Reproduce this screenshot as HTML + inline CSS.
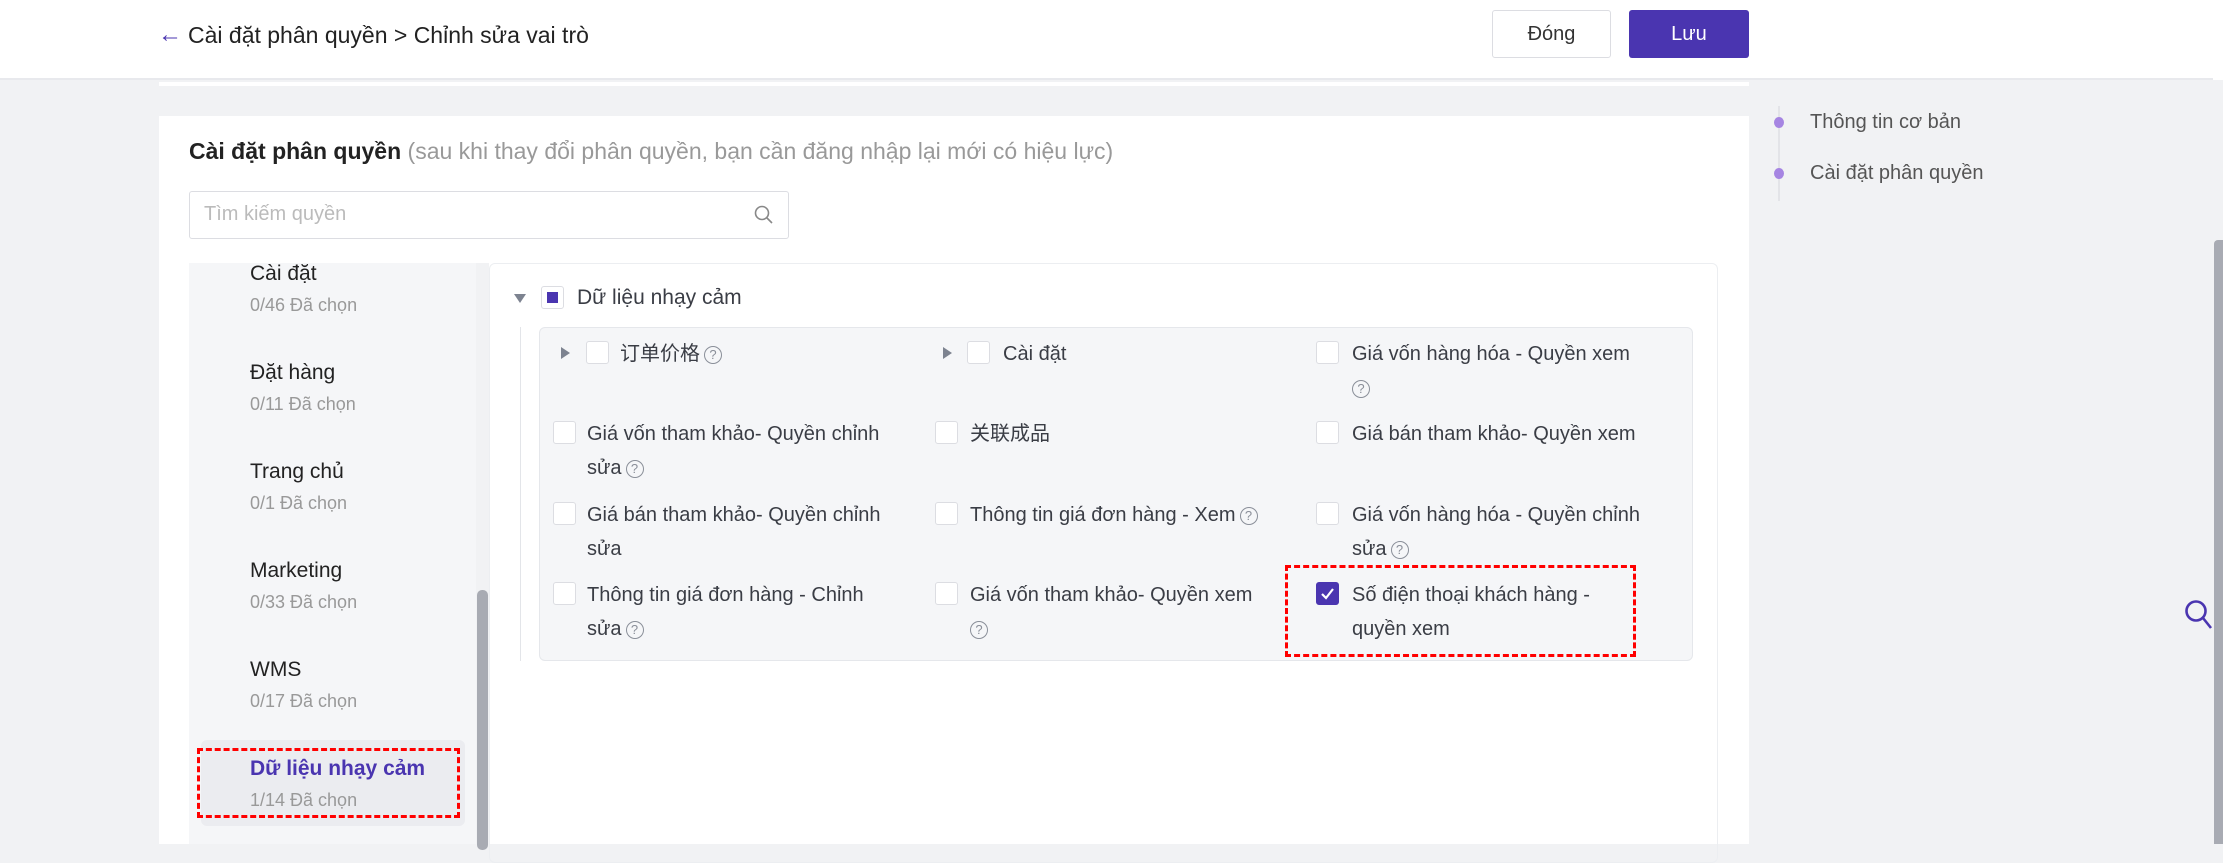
<!DOCTYPE html>
<html><head><meta charset="utf-8"><style>
*{margin:0;padding:0;box-sizing:border-box}
body{width:2223px;height:844px;overflow:hidden;background:#f1f2f4;font-family:"Liberation Sans","Noto Sans CJK SC",sans-serif;position:relative;color:#333}
.a{position:absolute;white-space:nowrap}
.cb{position:absolute;width:23px;height:23px;border:1px solid #dcdde2;border-radius:3px;background:#fff}
.tri{position:absolute;width:0;height:0;border-top:6px solid transparent;border-bottom:6px solid transparent;border-left:9px solid #7d8390}
.t{position:absolute;font-size:20px;color:#3a3d45;line-height:34px}
.q{display:inline-block;width:18px;height:18px;border:1.5px solid #8a8f99;border-radius:50%;font-size:13px;line-height:15px;text-align:center;color:#8a8f99;vertical-align:middle;margin-left:4px}
.mi{position:absolute;left:250px;font-size:21px;color:#222}
.ms{position:absolute;left:250px;font-size:18px;color:#999}
</style></head><body>
<div class="a" style="left:0;top:0;width:2213px;height:80px;background:#fff;border-bottom:2px solid #e8e9ed"></div>
<div class="a" style="left:158px;top:21px;font-size:24px;color:#4a35b0">←</div>
<div class="a" style="left:188px;top:22px;font-size:23px;color:#222">Cài đặt phân quyền &gt; Chỉnh sửa vai trò</div>
<div class="a" style="left:1492px;top:10px;width:119px;height:48px;border:1px solid #dcdde2;border-radius:3px;background:#fff;font-size:20px;text-align:center;line-height:46px;color:#333">Đóng</div>
<div class="a" style="left:1629px;top:10px;width:120px;height:48px;background:#4a35b0;border-radius:3px;font-size:20px;text-align:center;line-height:48px;color:#fff">Lưu</div>
<div class="a" style="left:159px;top:82px;width:1590px;height:4px;background:#fff"></div>
<div class="a" style="left:159px;top:116px;width:1590px;height:728px;background:#fff"></div>
<div class="a" style="left:189px;top:138px;font-size:23px;color:#222"><b>Cài đặt phân quyền</b> <span style="color:#999">(sau khi thay đổi phân quyền, bạn cần đăng nhập lại mới có hiệu lực)</span></div>
<div class="a" style="left:189px;top:191px;width:600px;height:48px;border:1px solid #dcdde2;border-radius:3px"></div>
<div class="a" style="left:204px;top:203px;font-size:20px;color:#bbb">Tìm kiếm quyền</div>
<svg class="a" style="left:753px;top:204px" width="22" height="22" viewBox="0 0 22 22"><circle cx="9" cy="9" r="6.5" fill="none" stroke="#888" stroke-width="1.6"/><line x1="14" y1="14" x2="19" y2="19" stroke="#888" stroke-width="1.6"/></svg>
<div class="a" style="left:189px;top:263px;width:287px;height:581px;background:#f5f6f8"></div>
<div class="a" style="left:476px;top:263px;width:13px;height:581px;background:#f1f2f4"></div>
<div class="a" style="left:477px;top:590px;width:11px;height:260px;background:#a8abb3;border-radius:5px"></div>
<div class="a" style="left:201px;top:740px;width:264px;height:86px;background:#ebecf0;border-radius:6px"></div>
<div class="a" style="left:197px;top:748px;width:263px;height:70px;border:3px dashed #f00"></div>
<div class="mi" style="top:262px">Cài đặt</div><div class="ms" style="top:295px">0/46 Đã chọn</div>
<div class="mi" style="top:361px">Đặt hàng</div><div class="ms" style="top:394px">0/11 Đã chọn</div>
<div class="mi" style="top:460px">Trang chủ</div><div class="ms" style="top:493px">0/1 Đã chọn</div>
<div class="mi" style="top:559px">Marketing</div><div class="ms" style="top:592px">0/33 Đã chọn</div>
<div class="mi" style="top:658px">WMS</div><div class="ms" style="top:691px">0/17 Đã chọn</div>
<div class="mi" style="top:757px;color:#4a35b0;font-weight:bold">Dữ liệu nhạy cảm</div><div class="ms" style="top:790px">1/14 Đã chọn</div>
<div class="a" style="left:489px;top:263px;width:1229px;height:600px;border:1px solid #eceef1;border-radius:6px"></div>
<div class="a" style="left:514px;top:294px;width:0;height:0;border-left:6px solid transparent;border-right:6px solid transparent;border-top:9px solid #7d8390"></div>
<div class="cb" style="left:541px;top:286px"><div style="position:absolute;left:5px;top:5px;width:11px;height:11px;background:#4a35b0"></div></div>
<div class="t" style="left:577px;top:281px;font-size:21px">Dữ liệu nhạy cảm</div>
<div class="a" style="left:520px;top:327px;width:1px;height:334px;background:#e3e5e9"></div>
<div class="a" style="left:539px;top:327px;width:1154px;height:334px;background:#f5f6f8;border:1px solid #e5e7eb;border-radius:6px"></div>
<div class="tri" style="left:561px;top:347px"></div><div class="cb" style="left:586px;top:341px"></div>
<div class="t" style="left:620px;top:337px">订单价格<span class="q">?</span></div>
<div class="tri" style="left:943px;top:347px"></div><div class="cb" style="left:967px;top:341px"></div>
<div class="t" style="left:1003px;top:337px">Cài đặt</div>
<div class="cb" style="left:1316px;top:341px"></div>
<div class="t" style="left:1352px;top:337px">Giá vốn hàng hóa - Quyền xem<br><span class="q" style="margin-left:0">?</span></div>
<div class="cb" style="left:553px;top:421px"></div>
<div class="t" style="left:587px;top:417px">Giá vốn tham khảo- Quyền chỉnh<br>sửa<span class="q">?</span></div>
<div class="cb" style="left:935px;top:421px"></div>
<div class="t" style="left:970px;top:417px">关联成品</div>
<div class="cb" style="left:1316px;top:421px"></div>
<div class="t" style="left:1352px;top:417px">Giá bán tham khảo- Quyền xem</div>
<div class="cb" style="left:553px;top:502px"></div>
<div class="t" style="left:587px;top:498px">Giá bán tham khảo- Quyền chỉnh<br>sửa</div>
<div class="cb" style="left:935px;top:502px"></div>
<div class="t" style="left:970px;top:498px">Thông tin giá đơn hàng - Xem<span class="q">?</span></div>
<div class="cb" style="left:1316px;top:502px"></div>
<div class="t" style="left:1352px;top:498px">Giá vốn hàng hóa - Quyền chỉnh<br>sửa<span class="q">?</span></div>
<div class="cb" style="left:553px;top:582px"></div>
<div class="t" style="left:587px;top:578px">Thông tin giá đơn hàng - Chỉnh<br>sửa<span class="q">?</span></div>
<div class="cb" style="left:935px;top:582px"></div>
<div class="t" style="left:970px;top:578px">Giá vốn tham khảo- Quyền xem<br><span class="q" style="margin-left:0">?</span></div>
<div class="a" style="left:1285px;top:565px;width:351px;height:92px;border:3px dashed #f00"></div>
<div class="cb" style="left:1316px;top:582px;background:#4a35b0;border-color:#4a35b0"><svg width="21" height="21" viewBox="0 0 21 21" style="position:absolute;left:0;top:0"><path d="M5 11 L9 15 L16 6" fill="none" stroke="#fff" stroke-width="2.2"/></svg></div>
<div class="t" style="left:1352px;top:578px">Số điện thoại khách hàng -<br>quyền xem</div>
<div class="a" style="left:1778px;top:106px;width:2px;height:95px;background:#e3e4e8"></div>
<div class="a" style="left:1774px;top:117px;width:10px;height:11px;border-radius:50%;background:#a685e2"></div>
<div class="a" style="left:1774px;top:168px;width:10px;height:11px;border-radius:50%;background:#a685e2"></div>
<div class="a" style="left:1810px;top:111px;font-size:20px;color:#555">Thông tin cơ bản</div>
<div class="a" style="left:1810px;top:162px;font-size:20px;color:#555">Cài đặt phân quyền</div>
<svg class="a" style="left:2184px;top:599px" width="30" height="32" viewBox="0 0 30 32"><circle cx="12" cy="12" r="9.5" fill="none" stroke="#4a35b0" stroke-width="2.6"/><line x1="19" y1="19" x2="27" y2="29" stroke="#4a35b0" stroke-width="2.6"/></svg>
<div class="a" style="left:2213px;top:0;width:10px;height:80px;background:#fff"></div>
<div class="a" style="left:2214px;top:240px;width:9px;height:604px;background:#a8abb3;border-radius:4px 0 0 0"></div>
</body></html>
